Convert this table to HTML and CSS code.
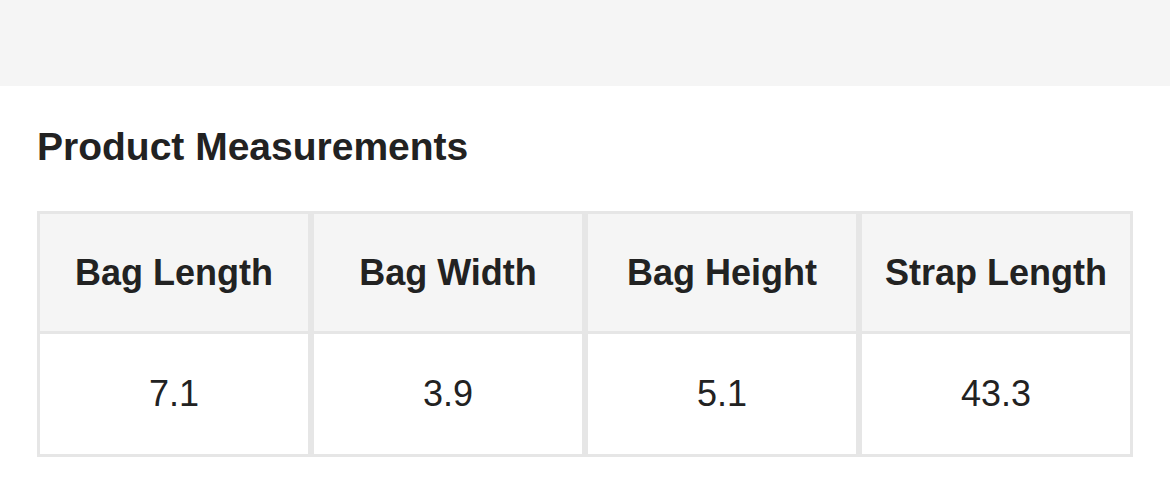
FILE: index.html
```html
<!DOCTYPE html>
<html>
<head>
<meta charset="utf-8">
<link rel="stylesheet" href="styles.css">
</head>
<body>
<div class="band"></div>
<section class="content">
  <h2 class="title">Product Measurements</h2>
  <table class="measure">
    <thead>
      <tr><th>Bag Length</th><th>Bag Width</th><th>Bag Height</th><th>Strap Length</th></tr>
    </thead>
    <tbody>
      <tr><td>7.1</td><td>3.9</td><td>5.1</td><td>43.3</td></tr>
    </tbody>
  </table>
</section>
</body>
</html>
```
FILE: styles.css
```css
html, body {
  margin: 0;
  padding: 0;
  background: #ffffff;
  font-family: "Liberation Sans", Arial, sans-serif;
  color: #222222;
}
.band {
  height: 86px;
  background: #f5f5f5;
}
.content {
  padding: 0 37px;
}
.title {
  margin: 0;
  padding-top: 39px;
  font-size: 39px;
  line-height: 44px;
  font-weight: bold;
  color: #222222;
}
.measure {
  margin-top: 42px;
  width: 1096px;
  border-collapse: separate;
  border-spacing: 0;
  table-layout: fixed;
}
.measure th,
.measure td {
  border-left: 3px solid #e6e6e6;
  border-right: 3px solid #e6e6e6;
  text-align: center;
  font-size: 36px;
  padding: 0;
}
.measure th {
  background: #f5f5f5;
  border-top: 3px solid #e6e6e6;
  border-bottom: 3px solid #e6e6e6;
  height: 117px;
  font-weight: bold;
}
.measure td {
  background: #ffffff;
  border-bottom: 3px solid #e6e6e6;
  height: 120px;
  font-weight: normal;
}
```
